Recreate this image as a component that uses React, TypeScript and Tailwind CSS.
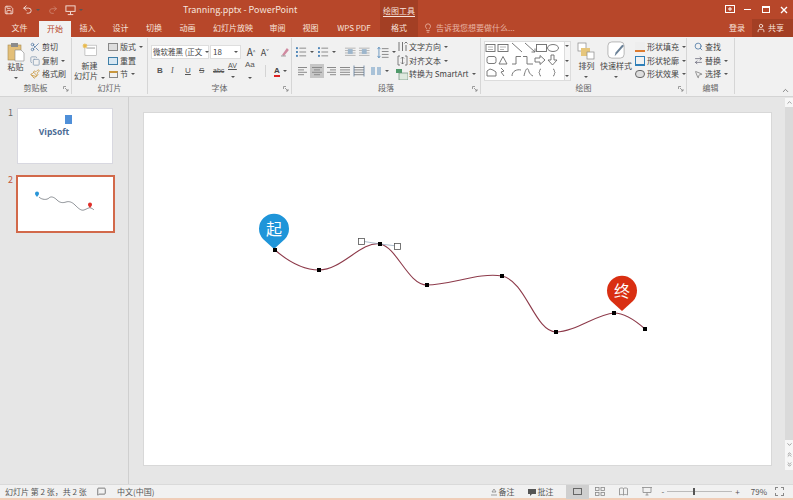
import {
  ArrowRightLeft,
  ChevronDown,
  ChevronUp,
  ChevronsDown,
  ChevronsUp,
  Copy,
  Lightbulb,
  MessageSquare,
  MousePointer2,
  Paintbrush,
  Redo2,
  Save,
  Scissors,
  Search,
  Undo2,
  User,
} from "lucide-react";
import type { ReactNode } from "react";

const tabs = [
  { label: "文件", w: "w-[39px]" },
  { label: "开始", w: "w-[32px]", active: true },
  { label: "插入", w: "w-[33px]" },
  { label: "设计", w: "w-[33px]" },
  { label: "切换", w: "w-[34px]" },
  { label: "动画", w: "w-[33px]" },
  { label: "幻灯片放映", w: "w-[58px]" },
  { label: "审阅", w: "w-[31px]" },
  { label: "视图", w: "w-[35px]" },
  { label: "WPS PDF", w: "w-[52px]" },
  { label: "格式", w: "w-[38px]", tool: true },
];

const Caret = () => (
  <span className="inline-block w-0 h-0 border-x-[2px] border-x-transparent border-t-[2px] border-t-[#555] ml-[3px]" />
);

const Small = ({
  icon,
  text,
  caret,
}: {
  icon: ReactNode;
  text: string;
  caret?: boolean;
}) => (
  <div className="flex items-center h-[14px] whitespace-nowrap">
    <span className="w-[12px] h-[12px] flex items-center justify-center mr-[1px]">{icon}</span>
    <span>{text}</span>
    {caret && <Caret />}
  </div>
);

const Group = ({
  label,
  w,
  launcher,
  children,
}: {
  label: string;
  w: string;
  launcher?: boolean;
  children: ReactNode;
}) => (
  <div className={`${w} h-[56px] mt-[1px] shrink-0 flex flex-col border-r border-[#d6d6d6] relative`}>
    <div className="flex-1 flex min-h-0">{children}</div>
    <div className="h-[13px] text-center text-[8px] leading-[13px] text-[#666]">{label}</div>
    {launcher && (
      <svg className="absolute right-[2px] bottom-[2px]" width="6" height="6" viewBox="0 0 6 6">
        <path d="M.5 3V.5H3M2 2l3 3M5 3v2H3" fill="none" stroke="#888" strokeWidth=".8" />
      </svg>
    )}
  </div>
);

const Lines = ({ kind, on }: { kind: "l" | "c" | "r" | "j" | "d"; on?: boolean }) => {
  const rows = [0, 1, 2, 3];
  const widths: Record<string, number[]> = {
    l: [9, 6, 9, 6],
    c: [10, 6, 10, 6],
    r: [9, 6, 9, 6],
    j: [10, 10, 10, 10],
    d: [10, 10, 10, 10],
  };
  return (
    <svg width="14" height="14" viewBox="0 0 14 14" className={on ? "bg-[#c6c6c6]" : ""}>
      {rows.map((r) => {
        const w = widths[kind][r];
        const x = kind === "l" ? 2 : kind === "r" ? 12 - w : 7 - w / 2;
        return <rect key={r} x={x} y={3 + r * 2.4} width={w} height="1" fill="#8a8a8a" />;
      })}
      {kind === "d" && <path d="M2 1.500v11M12 1.500v11" stroke="#5f7f9f" strokeWidth=".8" />}
    </svg>
  );
};

const BulletList = () => (
  <svg width="11" height="12" viewBox="0 0 11 12">
    {[2, 6, 10].map((y) => (
      <g key={y}>
        <rect x="0" y={y - 1} width="2" height="2" fill="#4f86b8" />
        <rect x="3.500" y={y - 0.5} width="7" height="1" fill="#8a8a8a" />
      </g>
    ))}
  </svg>
);

const IndentLines = () => (
  <svg width="13" height="12" viewBox="0 0 13 12">
    {[1.500, 4, 6.500, 9].map((y) => (
      <rect key={y} x="1" y={y} width="11" height="1" fill="#b5b5b5" />
    ))}
    <rect x="4" y="3" width="5" height="5" fill="#9db6cc" />
  </svg>
);

const LineSpacing = () => (
  <svg width="12" height="13" viewBox="0 0 12 13" fill="none">
    <path d="M2 1v11M.5 3L2 1l1.500 2M.5 10L2 12l1.500-2" stroke="#4f86b8" strokeWidth=".8" />
    {[2, 5, 8, 11].map((y) => (
      <rect key={y} x="5" y={y} width="7" height="1" fill="#8a8a8a" />
    ))}
  </svg>
);

const Gallery = () => (
  <svg width="81" height="38" viewBox="0 0 81 38" fill="none" stroke="#6b6b6b" strokeWidth=".9">
    <rect x="1" y="2.500" width="9" height="7" />
    <path d="M3 5h5M3 7.500h5" strokeWidth=".5" />
    <rect x="13" y="2.500" width="10" height="7" />
    <path d="M15 5h6M15 7.500h4" strokeWidth=".5" />
    <path d="M27 1l10 9M40 1l10 9M50 6.500v3.500h-3.500" />
    <rect x="51.500" y="2.500" width="10" height="7" />
    <ellipse cx="68" cy="6" rx="5.500" ry="3.500" />
    <rect x="2" y="14.500" width="9" height="7" rx="2" />
    <path d="M14 22l4-7.500 4 7.500z" />
    <path d="M27 22h4v-7.500h5M38 14.500h4V22h6" />
    <path d="M50 16h5v-2.500l5 4.500-5 4.500V20h-5zM66 13v5h-3l4.500 5 4.500-5h-3v-5z" />
    <path d="M2 34v-5l3-2 3 1 3 2v4zM16 26l3 3-3 1 3 4" />
    <path d="M27 34c0-5 5-7 9-6M39 34c2-9 4-9 5-4 1 2 2 3 4 4" />
    <path d="M56 27c-2 0-1 3-2 3.500 1 .5 0 3.500 2 3.500M68 27c2 0 1 3 2 3.500-1 .5 0 3.500-2 3.500" />
  </svg>
);

export default function App() {
  return (
    <div className="w-[793px] h-[500px] overflow-hidden flex flex-col bg-[#e6e6e6] text-[#444] font-['Noto_Sans_CJK_SC','Liberation_Sans',sans-serif]">
      {/* title bar */}
      <div className="h-[19px] shrink-0 bg-[#b7472a] flex items-center text-[#f6e3dc] relative">
        <Save size={10} className="ml-[4px]" />
        <Undo2 size={11} className="ml-[8px]" />
        <Caret />
        <Redo2 size={10} className="ml-[8px] opacity-40" />
        <svg width="11" height="12" viewBox="0 0 12 12" className="ml-[7px]" fill="none" stroke="#f6e3dc">
          <rect x="1" y="1.500" width="10" height="6" />
          <path d="M6 8v3M3 11h6" />
        </svg>
        <Caret />
        <div className="ml-[100px] text-[9px] w-[197px] whitespace-nowrap">Tranning.pptx - PowerPoint</div>
        <div className="w-[38px] h-[19px] bg-[#a33f24] text-center text-[8px] leading-[22px] underline underline-offset-2">
          绘图工具
        </div>
        <div className="ml-auto flex items-center pr-[4px]">
          <svg width="10" height="9" viewBox="0 0 10 9" className="mr-[9px]" fill="none" stroke="#fff">
            <rect x=".5" y=".5" width="9" height="7" />
            <path d="M3 4h4M5 2v4" />
          </svg>
          <div className="w-[7px] h-[1px] bg-white mr-[11px]" />
          <div className="w-[8px] h-[7px] border border-white border-t-2 mr-[10px]" />
          <svg width="8" height="8" viewBox="0 0 8 8" className="mr-[1px]" stroke="#fff" strokeWidth="1.400">
            <path d="M1 1l6 6M7 1l-6 6" />
          </svg>
        </div>
      </div>

      {/* tabs */}
      <div className="h-[18px] shrink-0 bg-[#b7472a] flex text-[8px] leading-[18px] text-[#f8e4dc]">
        {tabs.map((t) => (
          <div
            key={t.label}
            className={`${t.w} text-center whitespace-nowrap ${
              t.active ? "bg-[#f1f1f1] text-[#b7472a] mt-[2px] leading-[16px]" : t.tool ? "bg-[#a33f24]" : ""
            }`}
          >
            {t.label}
          </div>
        ))}
        <div className="ml-[5px] flex items-center text-[#e9b6a5] whitespace-nowrap">
          <Lightbulb size={10} />
          <span className="ml-[3px]">告诉我您想要做什么...</span>
        </div>
        <div className="ml-auto text-[#f8e4dc] pr-[7px]">登录</div>
        <div className="w-[41px] bg-[#a33f24] flex items-center pl-[4px]">
          <User size={10} />
          <span className="ml-[2px]">共享</span>
        </div>
      </div>

      {/* ribbon */}
      <div className="h-[60px] shrink-0 bg-[#f1f1f1] border-b border-[#d4d4d4] flex text-[8px] text-[#444] relative">
        <Group label="剪贴板" w="w-[72px]" launcher>
          <div className="w-[31px] flex flex-col items-center pt-[4px] leading-[10px]">
            <svg width="18" height="20" viewBox="0 0 18 20">
              <rect x="1" y="3" width="13" height="15" fill="#e3bf79" stroke="#a98b4e" strokeWidth=".6" />
              <rect x="4" y="1" width="7" height="4" fill="#8b8b8b" />
              <path d="M8 8h6l3 3v8H8z" fill="#fff" stroke="#888" strokeWidth=".6" />
            </svg>
            <span>粘贴</span>
            <span className="-ml-[3px] leading-[8px]">
              <Caret />
            </span>
          </div>
          <div className="flex flex-col pt-[2px] -ml-[2px]">
            <Small icon={<Scissors size={10} className="text-[#5b7fa8]" />} text="剪切" />
            <Small icon={<Copy size={10} className="text-[#8a9fb5]" />} text="复制" caret />
            <Small icon={<Paintbrush size={10} className="text-[#c9973d]" />} text="格式刷" />
          </div>
        </Group>

        <Group label="幻灯片" w="w-[76px]">
          <div className="w-[35px] flex flex-col items-center pt-[5px] leading-[10px] whitespace-nowrap">
            <svg width="20" height="18" viewBox="0 0 20 18">
              <rect x="3" y="3" width="16" height="14" fill="#fff" stroke="#999" strokeWidth=".7" />
              <rect x="5" y="6" width="12" height="2" fill="#bbb" />
              <path d="M3 0l1 2 2-1-1 2 2 1-2 1 1 2-2-1-1 2-1-2-2 1 1-2-2-1 2-1-1-2 2 1z" fill="#e9b949" />
            </svg>
            <span className="mt-[5px]">新建</span>
            <span>
              幻灯片
              <Caret />
            </span>
          </div>
          <div className="flex flex-col pt-[2px]">
            <Small
              icon={<span className="w-[10px] h-[8px] border border-[#888] bg-[#ddd]" />}
              text="版式"
              caret
            />
            <Small
              icon={<span className="w-[10px] h-[8px] border border-[#3f7fa8] bg-[#d7e7f2]" />}
              text="重置"
            />
            <Small
              icon={<span className="w-[9px] h-[7px] border border-[#888] border-t-[#c9973d] border-t-2" />}
              text="节"
              caret
            />
          </div>
        </Group>

        <Group label="字体" w="w-[144px]" launcher>
          <div className="flex flex-col w-full pl-[3px] pt-[7px]">
            <div className="flex items-center h-[14px]">
              <div className="w-[58px] h-[14px] bg-white border border-[#dedede] flex items-center justify-between px-[1px] whitespace-nowrap text-[7.5px]">
                <span>微软雅黑 (正文</span>
                <Caret />
              </div>
              <div className="w-[31px] h-[14px] ml-[1px] bg-white border border-[#dedede] flex items-center justify-between px-[2px]">
                <span>18</span>
                <Caret />
              </div>
              <span className="ml-[6px] text-[10px] leading-none">A<sup className="text-[5px]">^</sup></span>
              <span className="ml-[5px] text-[9px] leading-none">A<sup className="text-[5px]">ˇ</sup></span>
              <svg width="12" height="12" viewBox="0 0 12 12" className="ml-[10px]">
                <path d="M3 9l5-7 2 2-5 6z" fill="#d08aa0" />
                <path d="M2 10h5" stroke="#999" />
              </svg>
            </div>
            <div className="flex items-center h-[14px] mt-[5px] pl-[6px] text-[#555] font-['Liberation_Sans',sans-serif]">
              <span className="w-[14px] font-bold">B</span>
              <span className="w-[14px] italic font-['Liberation_Serif',serif]">I</span>
              <span className="w-[14px] underline">U</span>
              <span className="w-[14px] line-through">S</span>
              <span className="w-[15px] text-[7px] line-through">abc</span>
              <span className="w-[15px] text-[7px] underline">AV<Caret /></span>
              <span className="w-[15px] ml-[2px]">Aa<Caret /></span>
              <span className="ml-[5px] w-[1px] h-[12px] bg-[#d4d4d4]" />
              <span className="ml-[8px] font-bold border-b-2 border-[#d22] leading-[9px] text-[#444]">A</span>
              <Caret />
            </div>
          </div>
        </Group>

        <Group label="段落" w="w-[189px]" launcher>
          <div className="w-[104px] pl-[4px] pt-[7px] flex flex-col">
            <div className="flex items-center h-[14px]">
              <BulletList />
              <Caret />
              <span className="w-[5px]" />
              <BulletList />
              <Caret />
              <span className="w-[8px]" />
              <IndentLines />
              <span className="w-[2px]" />
              <IndentLines />
              <span className="w-[7px]" />
              <LineSpacing />
              <Caret />
            </div>
            <div className="flex items-center h-[14px] mt-[5px]">
              <Lines kind="l" />
              <Lines kind="c" on />
              <Lines kind="r" />
              <Lines kind="j" />
              <Lines kind="d" />
              <span className="w-[4px]" />
              <svg width="12" height="12" viewBox="0 0 12 12">
                <rect x="1" y="2" width="4" height="8" fill="#a9c2d8" />
                <rect x="7" y="2" width="4" height="8" fill="#a9c2d8" />
              </svg>
              <Caret />
            </div>
          </div>
          <div className="flex flex-col pt-[2px]">
            <Small
              icon={
                <svg width="11" height="11" viewBox="0 0 11 11" stroke="#666" strokeWidth=".9">
                  <path d="M2 1v9M5.500 1v9M9 4v6M7.500 2.500L9 1l1.500 1.500" fill="none" />
                </svg>
              }
              text="文字方向"
              caret
            />
            <Small
              icon={
                <svg width="11" height="11" viewBox="0 0 11 11" fill="none" stroke="#666" strokeWidth=".8">
                  <path d="M3 1H1v9h2M8 1h2v9H8M5.500 2v7M4 3.500L5.500 2 7 3.500M4 7.500L5.500 9 7 7.500" />
                </svg>
              }
              text="对齐文本"
              caret
            />
            <Small
              icon={
                <svg width="12" height="11" viewBox="0 0 12 11">
                  <rect x="0" y="0" width="6" height="4" fill="#4f9a6a" />
                  <rect x="3" y="4" width="9" height="7" fill="#dfe9df" stroke="#6b8f7a" strokeWidth=".7" />
                </svg>
              }
              text="转换为 SmartArt"
              caret
            />
          </div>
        </Group>

        <Group label="绘图" w="w-[206px]" launcher>
          <div className="ml-[3px] mt-[3px] w-[81px] h-[40px] bg-white border border-[#dcdcdc] shrink-0 overflow-hidden">
            <Gallery />
          </div>
          <div className="w-[6px] h-[40px] mt-[3px] flex flex-col justify-between items-center py-[3px] border border-l-0 border-[#dcdcdc] bg-[#f6f6f6] [&>span]:ml-0">
            <Caret />
            <Caret />
            <Caret />
          </div>
          <div className="w-[28px] ml-[2px] flex flex-col items-center pt-[4px] leading-[10px]">
            <svg width="18" height="18" viewBox="0 0 18 18">
              <rect x="1" y="1" width="8" height="8" fill="#fff" stroke="#888" strokeWidth=".7" />
              <rect x="4" y="6" width="9" height="8" fill="#e6c67c" />
              <rect x="10" y="10" width="7" height="7" fill="#fff" stroke="#888" strokeWidth=".7" />
            </svg>
            <span className="mt-[1px]">排列</span>
            <span className="-ml-[3px] leading-[8px]">
              <Caret />
            </span>
          </div>
          <div className="w-[32px] flex flex-col items-center pt-[3px] leading-[10px] whitespace-nowrap">
            <svg width="19" height="19" viewBox="0 0 20 20">
              <rect x="1" y="1" width="17" height="17" rx="4" fill="#fff" stroke="#999" strokeWidth=".7" />
              <path d="M18 5l-7 8-3 3 1-4 7-8z" fill="#6a8197" />
            </svg>
            <span className="mt-[1px]">快速样式</span>
            <span className="-ml-[3px] leading-[8px]">
              <Caret />
            </span>
          </div>
          <div className="flex flex-col pt-[2px] ml-[2px]">
            <Small icon={<span className="w-[10px] h-[10px] border-b-2 border-[#dd7a2e] bg-[#eee]" />} text="形状填充" caret />
            <Small icon={<span className="w-[10px] h-[10px] border border-[#2f7fb8] border-b-2" />} text="形状轮廓" caret />
            <Small icon={<span className="w-[10px] h-[8px] rounded-full border border-[#666] bg-[#ddd]" />} text="形状效果" caret />
          </div>
        </Group>

        <Group label="编辑" w="w-[48px]">
          <div className="flex flex-col pt-[2px] pl-[5px]">
            <Small icon={<Search size={9} className="text-[#3f6f9f]" />} text="查找" />
            <Small icon={<ArrowRightLeft size={9} className="text-[#667]" />} text="替换" caret />
            <Small icon={<MousePointer2 size={9} className="text-[#777]" />} text="选择" caret />
          </div>
        </Group>

        <ChevronUp size={9} className="absolute right-[3px] bottom-[1px] text-[#666]" />
      </div>

      {/* workspace */}
      <div className="flex-1 flex min-h-0">
        <div className="w-[129px] shrink-0 border-r border-[#cfcfcf] flex flex-col pt-[11px] text-[9px]">
          <div className="flex">
            <span className="w-[17px] pl-[8px] leading-[9px] text-[#666]">1</span>
            <div className="w-[96px] h-[56px] bg-white border border-[#d8d8e0] flex flex-col items-center">
              <div className="w-[7px] h-[9px] bg-[#4f8fd8] mt-[6px] ml-[7px]" />
              <span className="text-[8.5px] font-bold text-[#4a6a94] leading-[10px] mt-[3px] mr-[22px] font-['Open_Sans',sans-serif]">VipSoft</span>
            </div>
          </div>
          <div className="flex mt-[11px]">
            <span className="w-[16px] pl-[8px] leading-[9px] text-[#c25a3c]">2</span>
            <div className="w-[99px] h-[58px] bg-white border-2 border-[#d2694a]">
              <svg width="95" height="54" viewBox="18 177 95 54" fill="none">
                <path d="M39 197c3 3 8 3 10 1s5-1 8 2 6 3 9 2 6 0 9 3 6 6 9 5 5-3 7-2 2 1 3 2" stroke="#444c54" strokeWidth=".6" />
                <path d="M37 197c-1.500-2-2-2.500-2-3.500a2 2 0 1 1 4 0c0 1-.5 1.500-2 3.500z" fill="#2a96d8" />
                <path d="M90 208c-1.500-2-2-2.500-2-3.500a2 2 0 1 1 4 0c0 1-.5 1.500-2 3.500z" fill="#e0302a" />
              </svg>
            </div>
          </div>
        </div>

        <div className="flex-1 pl-[14px] pt-[15px] flex items-start">
          <div className="w-[629px] h-[354px] bg-white border border-[#d8d8d8] shrink-0">
            <svg width="627" height="352" viewBox="144 113 627 352" fill="none">
              <path
                d="M275 250C290 263 305 270 319 270C342 270 361 241 380 244C397 247 408 285 427 285C450 285 480 272 502 276C526 281 535 332 556 332C575 332 597 314 614 313C625 313 636 321 645 329"
                stroke="#8d3a4a"
                strokeWidth="1.100"
              />
              <path d="M361 241L380 244L397 246" stroke="#8aa0b8" strokeWidth=".7" />
              <rect x="358.500" y="238.500" width="6" height="6" fill="#fff" stroke="#555" strokeWidth=".8" />
              <rect x="394.500" y="243.500" width="6" height="6" fill="#fff" stroke="#555" strokeWidth=".8" />
              <path d="M263 239a15 15 0 1 1 22 0L274 249z" fill="#1f95d9" />
              <path d="M611 301a15 15 0 1 1 22 0L622 311z" fill="#d92f12" />
              <text x="274" y="235" fontSize="16" fill="#fff" stroke="none" textAnchor="middle">起</text>
              <text x="622" y="297" fontSize="16" fill="#fff" stroke="none" textAnchor="middle">终</text>
              {[
                [275, 250],
                [319, 270],
                [380, 244],
                [427, 285],
                [502, 276],
                [556, 332],
                [614, 313],
                [645, 329],
              ].map(([x, y]) => (
                <rect key={x} x={x - 2} y={y - 2} width="4" height="4" fill="#000" />
              ))}
            </svg>
          </div>
        </div>

        {/* scrollbar */}
        <div className="w-[8px] shrink-0 flex flex-col text-[#666] pt-[1px] pb-[14px]">
          <div className="h-[9px] bg-[#f7f7f7] flex justify-center">
            <ChevronUp size={7} className="mt-[1px]" />
          </div>
          <div className="flex-1 bg-[#dadada]" />
          <div className="h-[30px] bg-[#f7f7f7] flex flex-col items-center gap-[3px] pt-[1px]">
            <ChevronDown size={7} />
            <ChevronsUp size={7} />
            <ChevronsDown size={7} />
          </div>
        </div>
      </div>

      {/* status bar */}
      <div className="h-[16px] shrink-0 bg-[#f1f1f1] border-t border-[#dadada] border-b-2 border-b-[#f0cdb8] flex items-center text-[8px] text-[#555] whitespace-nowrap">
        <span className="ml-[5px] w-[92px]">幻灯片 第 2 张，共 2 张</span>
        <MessageSquare size={9} />
        <span className="ml-[11px]">中文(中国)</span>
        <svg width="6" height="8" viewBox="0 0 6 8" className="ml-auto mr-[2px]" fill="none" stroke="#888" strokeWidth=".8">
          <path d="M3 1L1 4h4zM0 7h6" />
        </svg>
        <span>备注</span>
        <svg width="8" height="8" viewBox="0 0 8 8" className="ml-[13px] mr-[2px]">
          <path d="M0 1h8v5H4L2 8V6H0z" fill="#555" />
        </svg>
        <span>批注</span>
        <div className="ml-[12px] w-[23px] h-[14px] bg-[#cfcfcf] flex items-center justify-center">
          <span className="w-[9px] h-[7px] border border-[#666]" />
        </div>
        <svg width="10" height="9" viewBox="0 0 10 9" className="ml-[6px]" fill="none" stroke="#888" strokeWidth=".8">
          <rect x=".5" y=".5" width="3.500" height="3" />
          <rect x="6" y=".5" width="3.500" height="3" />
          <rect x=".5" y="5.500" width="3.500" height="3" />
          <rect x="6" y="5.500" width="3.500" height="3" />
        </svg>
        <svg width="9" height="9" viewBox="0 0 9 9" className="ml-[14px]" fill="none" stroke="#888" strokeWidth=".8">
          <path d="M4.500 1.500C3.500.8 2 .8.500 1.500v6.500c1.500-.7 3-.7 4 0 1-.7 2.500-.7 4 0V1.500c-1.500-.7-3-.7-4 0zM4.500 1.500V8" />
        </svg>
        <svg width="10" height="9" viewBox="0 0 10 9" className="ml-[14px]" fill="none" stroke="#888" strokeWidth=".8">
          <path d="M0 .5h10M1 .5v5h8v-5M5 5.500V8M3.500 8h3" />
        </svg>
        <span className="ml-[10px]">-</span>
        <div className="ml-[3px] w-[65px] h-[1px] bg-[#bbb] relative">
          <span className="absolute left-[26px] -top-[3px] w-[2px] h-[7px] bg-[#555]" />
        </div>
        <span className="ml-[3px]">+</span>
        <span className="ml-[11px]">79%</span>
        <span className="ml-[8px] mr-[9px] w-[9px] h-[9px] border border-dashed border-[#888]" />
      </div>
    </div>
  );
}
